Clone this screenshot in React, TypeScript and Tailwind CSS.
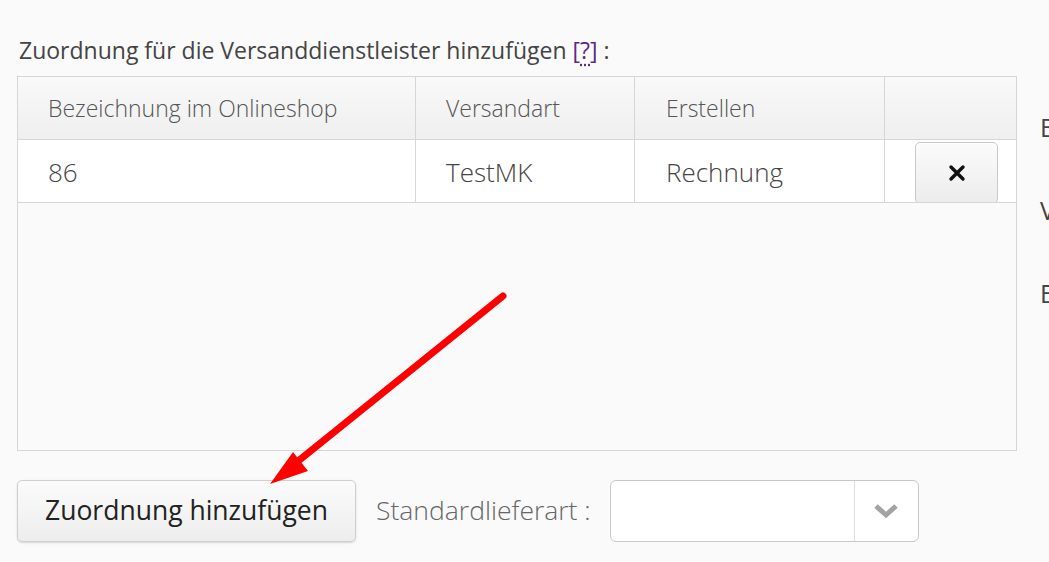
import React from 'react';

const font = { fontFamily: '"Open Sans", "Noto Sans", sans-serif' };

function DeleteButton() {
  return (
    <button className="flex h-[62px] w-[83px] items-center justify-center rounded-[5px] border border-[#c9c9c9] bg-gradient-to-b from-[#fbfbfb] to-[#ececec] text-[#111]">
      <svg width="18" height="18" viewBox="0 0 18 18">
        <path d="M3 3 L15 15 M15 3 L3 15" stroke="#111" strokeWidth="3.4" strokeLinecap="round" />
      </svg>
    </button>
  );
}

function Arrow() {
  return (
    <svg className="pointer-events-none absolute left-0 top-0" width="1049" height="562">
      <line x1="503" y1="296" x2="292" y2="466" stroke="#ff0000" strokeWidth="7" strokeLinecap="round" />
      <polygon points="270,484 293,452 308,471" fill="#ff0000" />
    </svg>
  );
}

export default function App() {
  return (
    <div className="relative h-[562px] w-[1049px] overflow-hidden bg-[#fafafa]" style={font}>
      <div className="flex">
        <div className="w-[1040px] shrink-0 pl-[17px] pt-[35px]">
          <div className="pl-[2px] text-[23px] leading-[31px] text-[#444]">
            Zuordnung für die Versanddienstleister hinzufügen{' '}
            <span className="text-[#5b2a86]">
              [<span className="underline decoration-dotted underline-offset-[5px]">?</span>]
            </span>{' '}
            :
          </div>

          <div className="mt-[10px] h-[375px] w-[1000px] border border-[#d6d6d6] bg-[#fafafa]">
            <div className="grid h-[63px] grid-cols-[398px_219px_250px_1fr] border-b border-[#d6d6d6] bg-gradient-to-b from-[#f9f9f9] to-[#efefef] text-[23px] font-light text-[#555]">
              <div className="flex items-center border-r border-[#d6d6d6] pl-[30px]">Bezeichnung im Onlineshop</div>
              <div className="flex items-center border-r border-[#d6d6d6] pl-[30px]">Versandart</div>
              <div className="flex items-center border-r border-[#d6d6d6] pl-[31px]">Erstellen</div>
              <div />
            </div>
            <div className="grid h-[63px] grid-cols-[398px_219px_250px_1fr] overflow-hidden border-b border-[#d6d6d6] bg-white text-[26px] font-light text-[#444]">
              <div className="flex items-center border-r border-[#d6d6d6] pl-[30px]">86</div>
              <div className="flex items-center border-r border-[#d6d6d6] pl-[30px]">TestMK</div>
              <div className="flex items-center border-r border-[#d6d6d6] pl-[31px]">Rechnung</div>
              <div className="flex items-start pl-[30px] pt-[2px]">
                <DeleteButton />
              </div>
            </div>
          </div>

          <div className="mt-[29px] flex items-center">
            <button className="h-[62px] w-[339px] rounded-[5px] border border-[#cfcfcf] bg-gradient-to-b from-[#fbfbfb] to-[#ededed] text-[26.5px] text-[#222] shadow-[0_1px_2px_rgba(0,0,0,0.15)]">
              Zuordnung hinzufügen
            </button>
            <span className="ml-[20px] text-[26.5px] font-light text-[#666]">Standardlieferart :</span>
            <div className="ml-[19px] flex h-[62px] w-[309px] overflow-hidden rounded-[6px] border border-[#c8c8c8] bg-white">
              <div className="flex-1 border-r border-[#dedede]" />
              <div className="flex w-[63px] items-center justify-center">
                <svg width="26" height="16" viewBox="0 0 26 16">
                  <path d="M3 3 L13 12 L23 3" fill="none" stroke="#a3a3a3" strokeWidth="5" strokeLinejoin="miter" />
                </svg>
              </div>
            </div>
          </div>
        </div>

        <div className="flex flex-col pt-[104px] text-[25px] text-[#444]">
          <div className="h-[83px] leading-[46px]">B</div>
          <div className="h-[83px] leading-[46px]">V</div>
          <div className="leading-[46px]">E</div>
        </div>
      </div>
      <Arrow />
    </div>
  );
}
